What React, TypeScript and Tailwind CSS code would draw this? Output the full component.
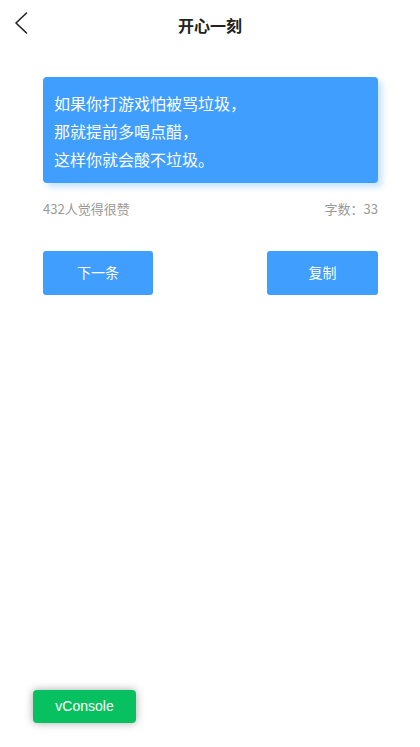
const FONT = {
  fontFamily: '"Noto Sans CJK SC", "Liberation Sans", sans-serif',
};

export default function App() {
  const lines = ["如果你打游戏怕被骂垃圾，", "那就提前多喝点醋，", "这样你就会酸不垃圾。"];

  return (
    <div className="relative min-h-[747px] w-[420px] bg-white" style={FONT}>
      {/* 顶部导航 */}
      <div className="relative flex h-[50px] items-center justify-center">
        <svg
          className="absolute left-[12px] top-[10px] h-[26px] w-[18px]"
          viewBox="0 0 18 26"
          fill="none"
          stroke="#222"
          strokeWidth={1.6}
          strokeLinecap="round"
          strokeLinejoin="round"
        >
          <polyline points="14.5,3 4,13 14.5,23" />
        </svg>
        <h1 className="text-[16px] font-bold text-[#222]">开心一刻</h1>
      </div>

      <div className="pl-[43px] pr-[42px] pt-[27px]">
        {/* 段子卡片 */}
        <div className="rounded-[4px] bg-[#409eff] px-[11px] pt-[12px] pb-[10px] shadow-[4px_4px_6px_rgba(64,158,255,0.3)]">
          {lines.map((line, i) => (
            <p key={i} className="text-[16px] leading-[28px] text-white">
              {line}
            </p>
          ))}
        </div>

        <div className="mt-[16px] flex items-center justify-between text-[13px] text-[#999]">
          <span>432人觉得很赞</span>
          <span>字数：33</span>
        </div>

        {/* 操作按钮 */}
        <div className="mt-[32px] flex justify-between">
          <button className="h-[44px] w-[110px] rounded-[3px] bg-[#409eff] text-[14px] text-white">
            下一条
          </button>
          <button className="h-[44px] w-[111px] rounded-[3px] bg-[#409eff] text-[14px] text-white">
            复制
          </button>
        </div>
      </div>

      <button
        className="absolute left-[33px] top-[690px] h-[33px] w-[103px] rounded-[4px] bg-[#07c160] text-[14px] text-white shadow-[0_0_8px_rgba(0,0,0,0.35)]"
        style={{ fontFamily: '"Liberation Sans", sans-serif' }}
      >
        vConsole
      </button>
    </div>
  );
}
